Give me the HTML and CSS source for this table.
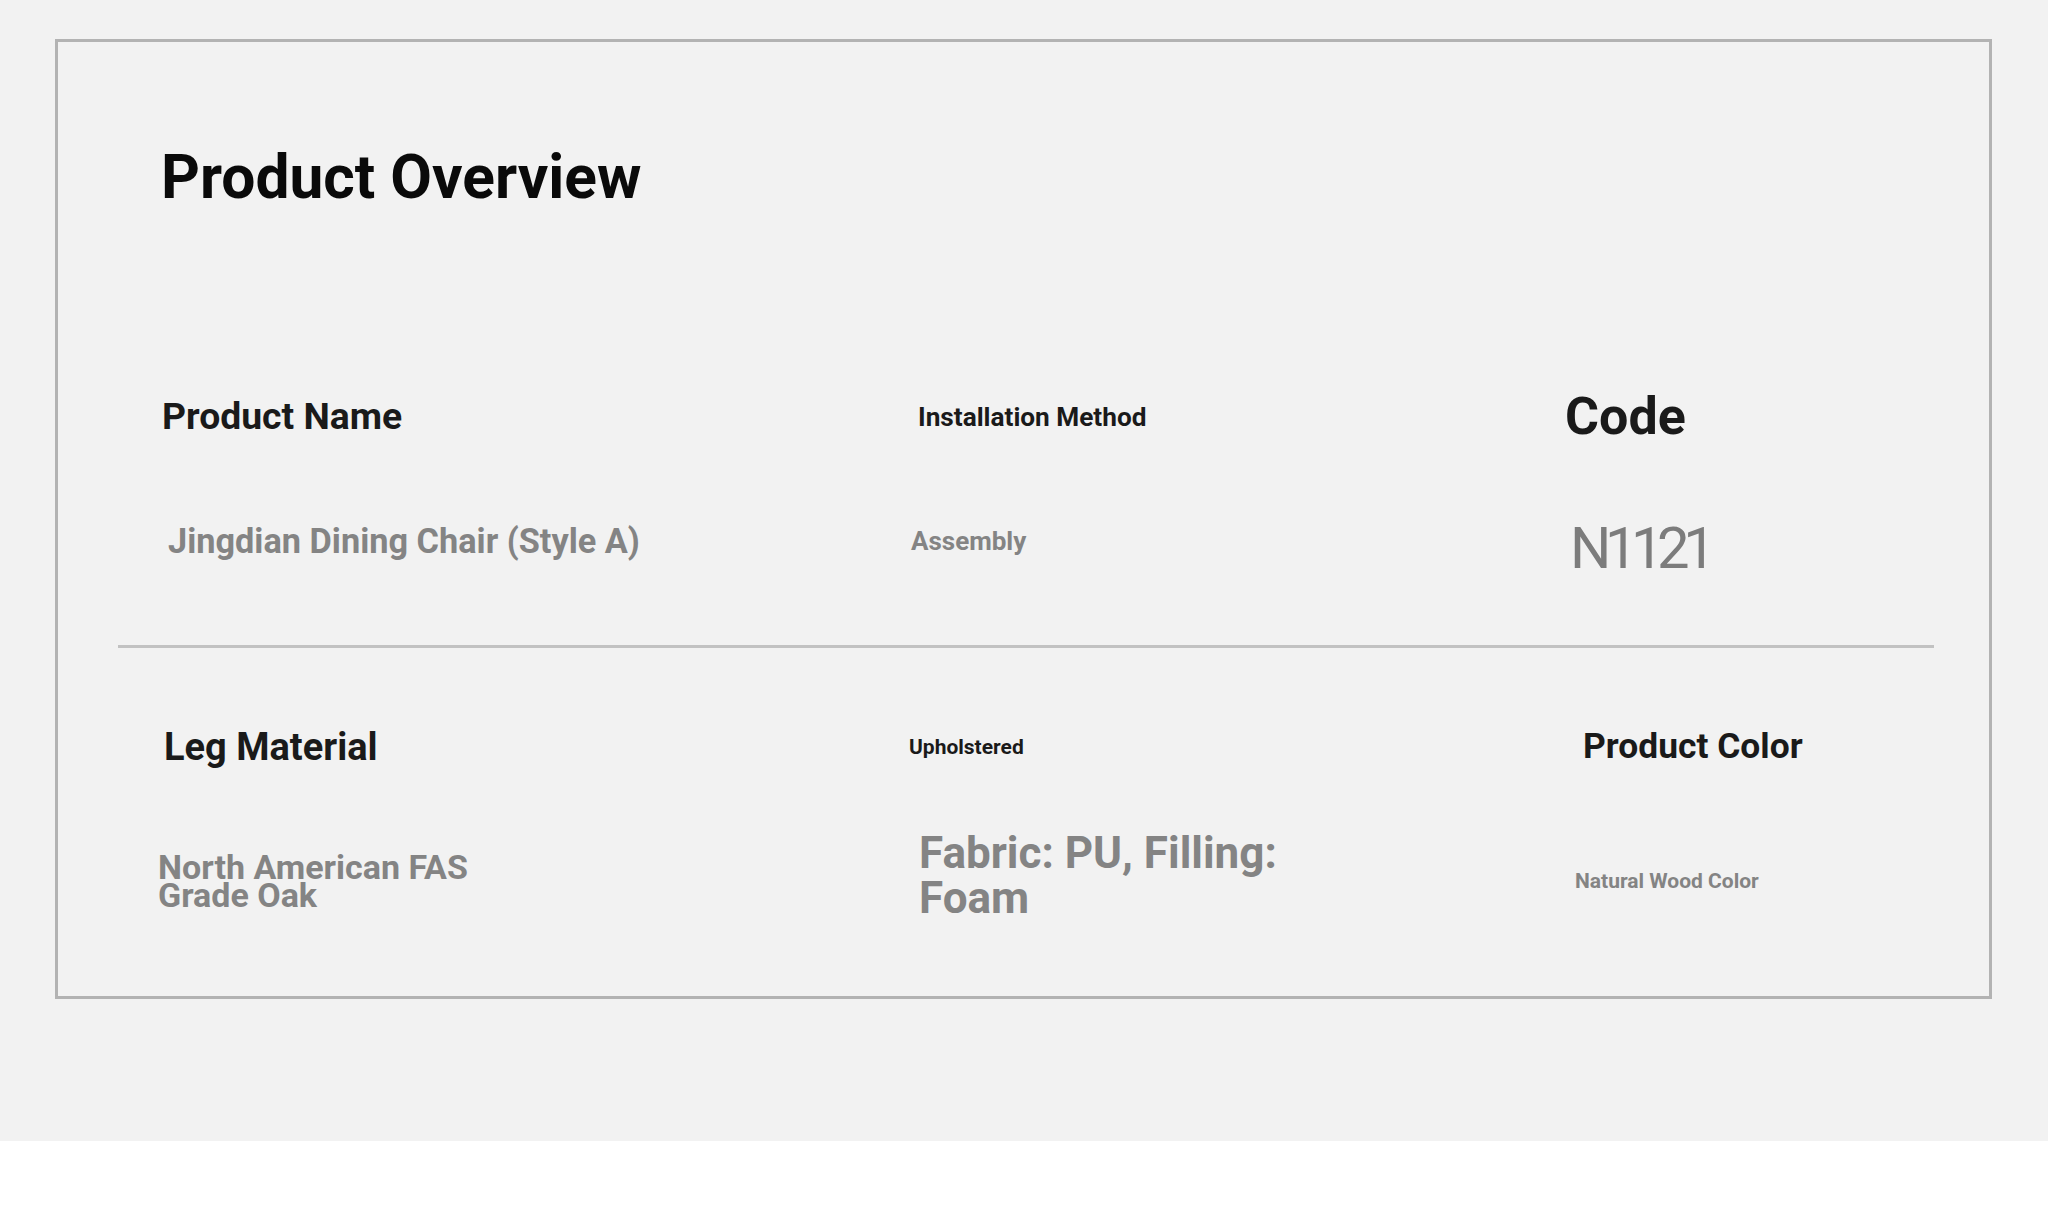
FILE: index.html
```html
<!DOCTYPE html>
<html lang="en">
<head>
<meta charset="utf-8">
<title>Product Overview</title>
<link rel="stylesheet" href="styles.css">
</head>
<body>
<div class="page">
  <section class="card">
    <h1 class="title">Product Overview</h1>

    <div class="specs">
      <div class="cell label c1 pn">Product Name</div>
      <div class="cell label c2 im">Installation Method</div>
      <div class="cell label c3 code">Code</div>

      <div class="cell value c1 name">Jingdian Dining Chair (Style A)</div>
      <div class="cell value c2 asm">Assembly</div>
      <div class="cell value c3 num"><span>N1121</span></div>
    </div>

    <div class="divider"></div>

    <div class="specs second">
      <div class="cell label c1 leg">Leg Material</div>
      <div class="cell label c2 uph">Upholstered</div>
      <div class="cell label c3 pc">Product Color</div>

      <div class="cell value c1 oak"><span>North American FAS Grade Oak</span></div>
      <div class="cell value c2 fab"><span>Fabric: PU, Filling: Foam</span></div>
      <div class="cell value c3 nwc">Natural Wood Color</div>
    </div>
  </section>
</div>
</body>
</html>
```

FILE: styles.css
```css
* { box-sizing: border-box; }

html, body {
  margin: 0;
  padding: 0;
  background: #ffffff;
  font-family: Roboto, "Noto Sans", "Liberation Sans", sans-serif;
}

.page {
  height: 1141px;
  background: #f2f2f2;
  padding: 39px 56px 0 55px;
}

.card {
  height: 960px;
  border: 3px solid #b3b3b3;
  padding: 106px 55px 0 60px;
}

.title {
  margin: 0 0 0 43px;
  font-size: 60.5px;
  line-height: 60px;
  font-weight: 700;
  color: #0a0a0a;
}

.specs {
  margin-top: 169px;
  display: grid;
  grid-template-columns: 791px 656px 369px;
  grid-template-rows: 80px 80px;
  row-gap: 44px;
}

.specs.second {
  margin-top: 59px;
  grid-template-rows: 80px 100px;
}

.cell {
  display: flex;
  align-items: center;
  font-weight: 700;
  line-height: 1;
}

.label { color: #1a1a1a; }
.value { color: #848484; }

/* row 1 labels */
.pn   { font-size: 37.3px; padding-left: 44px; }
.im   { font-size: 26.2px; padding-left: 9px; }
.code { font-size: 52px; padding-left: 0; }

/* row 1 values */
.name { font-size: 34.3px; padding-left: 50px; }
.asm  { font-size: 26px; padding-left: 2px; }
.num  {
  font-size: 58px;
  font-weight: 400;
  color: #7c7c7c;
  padding-left: 5px;
  padding-top: 13px;
  letter-spacing: -6.5px;
}

.divider {
  height: 3px;
  margin-top: 64px;
  background: #c2c2c2;
}

/* row 2 labels */
.leg { font-size: 38px; padding-left: 46px; }
.uph { font-size: 21px; padding-left: 0; }
.pc  { font-size: 35.4px; padding-left: 18px; }

/* row 2 values */
.oak {
  font-size: 34px;
  line-height: 28px;
  padding-left: 40px;
}
.oak span { display: block; max-width: 380px; }

.fab {
  font-size: 44px;
  line-height: 45px;
  padding-left: 10px;
  padding-bottom: 10px;
}
.fab span { display: block; max-width: 420px; }

.nwc { font-size: 21px; padding-left: 10px; }
```
